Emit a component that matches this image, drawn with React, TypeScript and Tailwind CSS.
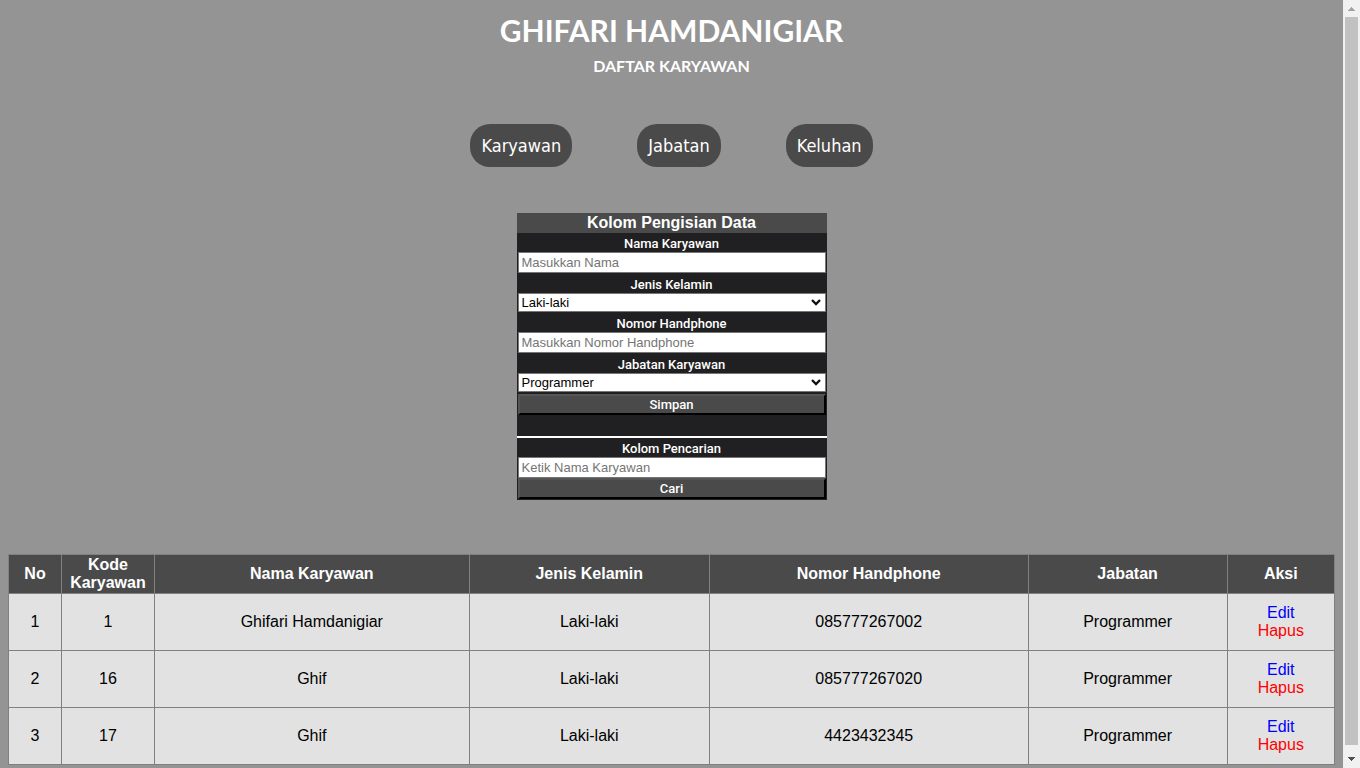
import React from "react";

const employees = [
  { no: 1, code: 1, name: "Ghifari Hamdanigiar", gender: "Laki-laki", phone: "085777267002", role: "Programmer" },
  { no: 2, code: 16, name: "Ghif", gender: "Laki-laki", phone: "085777267020", role: "Programmer" },
  { no: 3, code: 17, name: "Ghif", gender: "Laki-laki", phone: "4423432345", role: "Programmer" },
];

const navItems = ["Karyawan", "Jabatan", "Keluhan"];

const labelClass = "block h-5 pt-0.5 text-center text-[13px] leading-5 font-medium text-white [font-family:Roboto,sans-serif]";
const inputClass =
  "block h-[21px] w-full border border-[#767676] bg-white px-[3px] text-[13px] leading-4 text-black outline-none placeholder:text-[#757575]";
const buttonClass =
  "block h-[21px] w-full border-2 border-t-[#555555] border-l-[#555555] border-r-black border-b-black bg-[#4a4a4a] text-center text-[13px] leading-4 font-medium text-white [font-family:Roboto,sans-serif]";
const cellClass = "border border-[#808080] p-0";

function SelectField({ id, options }: { id: string; options: string[] }) {
  return (
    <div className="relative">
      <select
        id={id}
        className="block h-[19px] w-full appearance-none border border-[#767676] bg-white pr-5 pl-[3px] text-[13px] leading-4 text-black"
      >
        {options.map((option) => (
          <option key={option}>{option}</option>
        ))}
      </select>
      <svg
        className="pointer-events-none absolute top-1.5 right-1 h-2 w-3"
        viewBox="0 0 12 8"
        fill="none"
        stroke="#101010"
        strokeWidth="2.3"
        aria-hidden="true"
      >
        <path d="M2 1 6 5 10 1" />
      </svg>
    </div>
  );
}

function ScrollRail() {
  return (
    <div className="flex w-[17px] shrink-0 flex-col items-center bg-[#f1f1f1]" aria-hidden="true">
      <svg className="h-[17px] w-[17px]" viewBox="0 0 17 17" fill="#a3a3a3">
        <path d="M8 7h1v1h1v1h1v1h1v1H5v-1h1V9h1V8h1z" />
      </svg>
      <div className="w-[13px] grow bg-[#c1c1c1]" />
      <svg className="mt-1.5 h-[17px] w-[17px]" viewBox="0 0 17 17" fill="#505050">
        <path d="M5 6h7v1h-1v1h-1v1H9v1H8V9H7V8H6V7H5z" />
      </svg>
    </div>
  );
}

export default function App() {
  return (
    <div className="flex min-h-screen bg-[#949494] [font-family:'Liberation_Sans',Arial,sans-serif]">
      <main className="min-w-0 grow px-2">
        <header className="pt-2.5 text-center font-bold text-white [font-family:Lato,sans-serif]">
          <h1 className="text-[30px] leading-10">GHIFARI HAMDANIGIAR</h1>
          <h2 className="pt-1.5 text-[16px] leading-5">DAFTAR KARYAWAN</h2>
        </header>

        <nav className="mt-12 flex justify-center gap-[65px] text-[18px] leading-6 text-white [font-family:'DejaVu_Sans_Condensed','Noto_Sans',sans-serif]">
          {navItems.map((item) => (
            <a key={item} href={`#${item.toLowerCase()}`} className="flex h-[43px] items-center rounded-[20px] bg-[#4a4a4a] px-[11px]">
              {item}
            </a>
          ))}
        </nav>

        <section className="mx-auto mt-[46px] w-[310px] bg-[#202022] pb-px">
          <h3 className="bg-[#4a4a4a] text-center text-[16px] leading-5 font-bold text-white">Kolom Pengisian Data</h3>
          <form className="-mt-px px-px" onSubmit={(e) => e.preventDefault()}>
            <label htmlFor="nama" className={labelClass}>Nama Karyawan</label>
            <input id="nama" placeholder="Masukkan Nama" className={inputClass} />
            <label htmlFor="kelamin" className={labelClass}>Jenis Kelamin</label>
            <SelectField id="kelamin" options={["Laki-laki", "Perempuan"]} />
            <label htmlFor="telepon" className={labelClass}>Nomor Handphone</label>
            <input id="telepon" placeholder="Masukkan Nomor Handphone" className={inputClass} />
            <label htmlFor="jabatan" className={labelClass}>Jabatan Karyawan</label>
            <SelectField id="jabatan" options={["Programmer"]} />
            <button type="submit" className={`mt-0.5 ${buttonClass}`}>Simpan</button>
          </form>
          <form className="mt-[21px] border-t-2 border-white" onSubmit={(e) => e.preventDefault()}>
            <div className="-mt-px px-px">
              <label htmlFor="cari" className={labelClass}>Kolom Pencarian</label>
              <input id="cari" placeholder="Ketik Nama Karyawan" className={inputClass} />
              <button type="submit" className={buttonClass}>Cari</button>
            </div>
          </form>
        </section>

        <table className="mt-[54px] mb-0.5 w-full table-fixed border-collapse text-center text-[16px] leading-[18px] text-black">
          <colgroup>
            <col className="w-[4%]" />
            <col className="w-[7%]" />
            <col className="w-[23.75%]" />
            <col className="w-[18.1%]" />
            <col className="w-[24.05%]" />
            <col className="w-[15%]" />
            <col className="w-[8.1%]" />
          </colgroup>
          <thead className="bg-[#4a4a4a] text-white">
            <tr className="h-[39px]">
              {["No", "Kode Karyawan", "Nama Karyawan", "Jenis Kelamin", "Nomor Handphone", "Jabatan", "Aksi"].map((heading) => (
                <th key={heading} scope="col" className={cellClass}>{heading}</th>
              ))}
            </tr>
          </thead>
          <tbody className="bg-[#e2e2e2]">
            {employees.map((employee) => (
              <tr key={employee.no} className="h-[57px]">
                <td className={cellClass}>{employee.no}</td>
                <td className={cellClass}>{employee.code}</td>
                <td className={cellClass}>{employee.name}</td>
                <td className={cellClass}>{employee.gender}</td>
                <td className={cellClass}>{employee.phone}</td>
                <td className={cellClass}>{employee.role}</td>
                <td className={cellClass}>
                  <a href="#edit" className="block text-[#0000ff]">Edit</a>
                  <a href="#hapus" className="block text-[#ff0000]">Hapus</a>
                </td>
              </tr>
            ))}
          </tbody>
        </table>
      </main>
      <ScrollRail />
    </div>
  );
}
